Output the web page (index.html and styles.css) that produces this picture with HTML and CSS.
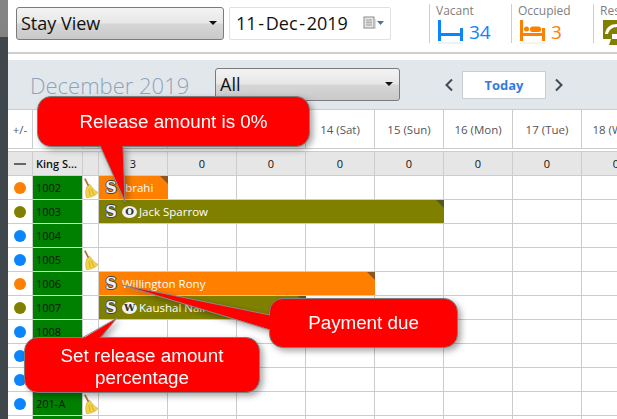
FILE: index.html
```html
<!DOCTYPE html>
<html lang="en">
<head>
<meta charset="utf-8">
<title>Stay View</title>
<link rel="stylesheet" href="styles.css">
</head>
<body>
<svg class="defs" width="0" height="0" aria-hidden="true">
  <symbol id="broom" viewBox="0 0 14 20">
    <path d="M.8 .6 L4.600 8" stroke="#a9762f" stroke-width="1.700" fill="none"/>
    <path d="M2.600 9 L6 6.400 C8 9.600 10.800 12.400 14 14.600 C12 17.600 7 19.800 2.400 19.800 C1.400 16 1.400 12 2.600 9 Z" fill="#f2d14a" stroke="#c89f2c" stroke-width=".5"/>
    <path d="M4.800 11 L6.400 18 M7 10.500 L10 16.800" stroke="#c99f2a" stroke-width=".7" fill="none"/>
  </symbol>
</svg>
<div class="page">
  <div class="rail"></div>
  <main class="main">
    <header class="topbar">
      <div class="select select-view"><span>Stay View</span><i class="caret"></i></div>
      <div class="datebox">
        <span class="date">11 - Dec - 2019</span>
        <svg class="cal" width="21" height="14" viewBox="0 0 21 14">
          <rect x="1" y="1" width="10" height="11" fill="#e8e8e8" stroke="#8a8a8a"/>
          <path d="M3 4h6M3 6.500h6M3 9h6M4 3v7M6 3v7M8 3v7" stroke="#a9a9a9" stroke-width=".8" fill="none"/>
          <path d="M12 13V3" stroke="#bbb" fill="none"/>
          <path d="M14 5h7l-3.500 4z" fill="#5a6f87"/>
        </svg>
      </div>
      <section class="stat stat-vacant">
        <div class="stat-label">Vacant</div>
        <div class="stat-value">
          <svg width="26" height="24" viewBox="0 0 26 24"><path d="M0 0h3v13h19V8h3v13h-3v-5H3v5H0z" fill="#0a84ff"/><path d="M0 23h25" stroke="#d8e8f6"/></svg>
          <span>34</span>
        </div>
      </section>
      <section class="stat stat-occupied">
        <div class="stat-label">Occupied</div>
        <div class="stat-value">
          <svg width="26" height="24" viewBox="0 0 26 24"><path d="M0 0h3v13h19V8h3v13h-3v-5H3v5H0z" fill="#ff8000"/><circle cx="6.500" cy="9" r="2.500" fill="#ff8000"/><rect x="10" y="6.500" width="11" height="5.500" rx="2.500" fill="#ff8000"/><path d="M0 23h25" stroke="#f5e6d2"/></svg>
          <span>3</span>
        </div>
      </section>
      <section class="stat stat-reserved">
        <div class="stat-label">Reserved</div>
        <div class="stat-value">
          <svg width="26" height="25" viewBox="0 0 26 25"><path d="M0 0h26v25H0z" fill="#808000"/><path d="M2 14C3 7 8 4 14 4v3C9 7 6 10 5 14zM9 14h5v5H9zM0 19h8l-2 6H0z" fill="#fff"/></svg>
        </div>
      </section>
    </header>

    <div class="toolbar">
      <h1 class="month">December 2019</h1>
      <div class="select select-filter"><span>All</span><i class="caret"></i></div>
      <div class="nav">
        <svg width="10" height="14" viewBox="0 0 10 14"><path d="M8 1.500 2.500 7 8 12.500" fill="none" stroke="#3f4a54" stroke-width="2"/></svg>
        <button class="today">Today</button>
        <svg width="10" height="14" viewBox="0 0 10 14"><path d="M2 1.500 7.500 7 2 12.500" fill="none" stroke="#3f4a54" stroke-width="2"/></svg>
      </div>
    </div>

    <div class="grid">
      <div class="row row-head">
        <div class="c c-status plusminus">+/-</div><div class="c c-room"></div><div class="c c-icon"></div>
        <div class="c c-day"></div><div class="c c-day"></div><div class="c c-day"></div><div class="c c-day">14 (Sat)</div><div class="c c-day">15 (Sun)</div><div class="c c-day">16 (Mon)</div><div class="c c-day">17 (Tue)</div><div class="c c-day">18 (Wed)</div>
      </div>
      <div class="row row-sum">
        <div class="c c-status"><i class="dash"></i></div><div class="c c-room type">King S...</div><div class="c c-icon"></div>
        <div class="c c-day">3</div><div class="c c-day">0</div><div class="c c-day">0</div><div class="c c-day">0</div><div class="c c-day">0</div><div class="c c-day">0</div><div class="c c-day">0</div><div class="c c-day">0</div>
      </div>

      <div class="row">
        <div class="c c-status"><i class="dot orange"></i></div><div class="c c-room">1002</div><div class="c c-icon"><svg class="broom"><use href="#broom"/></svg></div>
        <div class="c c-day"><div class="bar bar-orange span1"><b class="s">S</b><span class="name">Ibrahi</span></div></div><div class="c c-day"></div><div class="c c-day"></div><div class="c c-day"></div><div class="c c-day"></div><div class="c c-day"></div><div class="c c-day"></div><div class="c c-day"></div>
      </div>
      <div class="row">
        <div class="c c-status"><i class="dot olive"></i></div><div class="c c-room">1003</div><div class="c c-icon"></div>
        <div class="c c-day"><div class="bar bar-olive span5"><b class="s">S</b><b class="badge">O</b><span class="name">Jack Sparrow</span></div></div><div class="c c-day"></div><div class="c c-day"></div><div class="c c-day"></div><div class="c c-day"></div><div class="c c-day"></div><div class="c c-day"></div><div class="c c-day"></div>
      </div>
      <div class="row">
        <div class="c c-status"><i class="dot blue"></i></div><div class="c c-room">1004</div><div class="c c-icon"></div>
        <div class="c c-day"></div><div class="c c-day"></div><div class="c c-day"></div><div class="c c-day"></div><div class="c c-day"></div><div class="c c-day"></div><div class="c c-day"></div><div class="c c-day"></div>
      </div>
      <div class="row">
        <div class="c c-status"><i class="dot blue"></i></div><div class="c c-room">1005</div><div class="c c-icon"><svg class="broom"><use href="#broom"/></svg></div>
        <div class="c c-day"></div><div class="c c-day"></div><div class="c c-day"></div><div class="c c-day"></div><div class="c c-day"></div><div class="c c-day"></div><div class="c c-day"></div><div class="c c-day"></div>
      </div>
      <div class="row">
        <div class="c c-status"><i class="dot orange"></i></div><div class="c c-room">1006</div><div class="c c-icon"></div>
        <div class="c c-day"><div class="bar bar-orange span4"><b class="s">S</b><span class="name">Willington Rony</span></div></div><div class="c c-day"></div><div class="c c-day"></div><div class="c c-day"></div><div class="c c-day"></div><div class="c c-day"></div><div class="c c-day"></div><div class="c c-day"></div>
      </div>
      <div class="row">
        <div class="c c-status"><i class="dot olive"></i></div><div class="c c-room">1007</div><div class="c c-icon"></div>
        <div class="c c-day"><div class="bar bar-olive span3"><b class="s">S</b><b class="badge">W</b><span class="name">Kaushal Nair</span></div></div><div class="c c-day"></div><div class="c c-day"></div><div class="c c-day"></div><div class="c c-day"></div><div class="c c-day"></div><div class="c c-day"></div><div class="c c-day"></div>
      </div>
      <div class="row">
        <div class="c c-status"><i class="dot blue"></i></div><div class="c c-room">1008</div><div class="c c-icon"></div>
        <div class="c c-day"></div><div class="c c-day"></div><div class="c c-day"></div><div class="c c-day"></div><div class="c c-day"></div><div class="c c-day"></div><div class="c c-day"></div><div class="c c-day"></div>
      </div>
      <div class="row">
        <div class="c c-status"><i class="dot blue"></i></div><div class="c c-room"></div><div class="c c-icon"></div>
        <div class="c c-day"></div><div class="c c-day"></div><div class="c c-day"></div><div class="c c-day"></div><div class="c c-day"></div><div class="c c-day"></div><div class="c c-day"></div><div class="c c-day"></div>
      </div>
      <div class="row">
        <div class="c c-status"><i class="dot blue"></i></div><div class="c c-room"></div><div class="c c-icon"></div>
        <div class="c c-day"></div><div class="c c-day"></div><div class="c c-day"></div><div class="c c-day"></div><div class="c c-day"></div><div class="c c-day"></div><div class="c c-day"></div><div class="c c-day"></div>
      </div>
      <div class="row">
        <div class="c c-status"><i class="dot blue"></i></div><div class="c c-room">201-A</div><div class="c c-icon"><svg class="broom"><use href="#broom"/></svg></div>
        <div class="c c-day"></div><div class="c c-day"></div><div class="c c-day"></div><div class="c c-day"></div><div class="c c-day"></div><div class="c c-day"></div><div class="c c-day"></div><div class="c c-day"></div>
      </div>
      <div class="row">
        <div class="c c-status"></div><div class="c c-room"></div><div class="c c-icon"></div>
        <div class="c c-day"></div><div class="c c-day"></div><div class="c c-day"></div><div class="c c-day"></div><div class="c c-day"></div><div class="c c-day"></div><div class="c c-day"></div><div class="c c-day"></div>
      </div>
    </div>
  </main>

  <div class="callout callout-release">
    <div class="bubble">Release amount is 0%</div>
    <svg class="tail" width="1" height="1"><path class="t-fill" d="M63 49 88 105.500 86 49z"/><path class="t-line" d="M63 50 88 105.500 86 50"/></svg>
  </div>
  <div class="callout callout-payment">
    <div class="bubble">Payment due</div>
    <svg class="tail" width="1" height="1"><path class="t-fill" d="M2 17-147-13 2 32z"/><path class="t-line" d="M1 17-147-13 1 32"/></svg>
  </div>
  <div class="callout callout-percent">
    <div class="bubble">Set release amount<br>percentage</div>
    <svg class="tail" width="1" height="1"><path class="t-fill" d="M58 2 93-19 76 2z"/><path class="t-line" d="M58 1 93-19 76 1"/></svg>
  </div>
</div>
</body>
</html>
```

FILE: styles.css
```css
* { box-sizing: border-box; }
html, body { margin: 0; padding: 0; }
body { width: 617px; height: 419px; overflow: hidden; background: #fff; font-family: "Open Sans", "Noto Sans", sans-serif; }
.defs { position: absolute; }
.page { position: relative; display: flex; width: 617px; height: 419px; overflow: hidden; }

.rail { flex: 0 0 8px; background: linear-gradient(#3f474d, #3f474d) 0 37px / 8px 382px no-repeat, linear-gradient(#858585, #626262); }
.main { flex: 0 0 auto; width: 680px; }

.topbar { display: flex; align-items: flex-start; height: 54px; padding: 7px 0 0 8px; border-bottom: 2px solid #cfcfcf; background: #fff; }
.topbar > * { flex: none; }
.select { display: flex; align-items: center; justify-content: space-between; height: 33px; padding: 0 6px 1px 4px; border: 1px solid #7b7b7b; border-radius: 3px; background: linear-gradient(#f3f3f3, #e7e7e7 48%, #d6d6d6 52%, #c9c9c9); color: #111; font-size: 18px; }
.caret { width: 0; height: 0; border: 4px solid transparent; border-top: 4px solid #111; border-bottom: 0; }
.select-view { width: 208px; }
.datebox { display: flex; align-items: center; justify-content: space-between; width: 162px; height: 33px; margin-left: 5px; padding: 0 0 1px 6px; border: 1px solid #e0e0e0; border-radius: 2px; color: #111; font-size: 18px; }
.date { word-spacing: -3px; }
.cal { margin-right: 6px; }

.stat { width: 82px; height: 39px; margin-top: -3px; padding-left: 6px; border-left: 1px solid #cdcdcd; }
.stat-vacant { margin-left: 38px; }
.stat-label { color: #808080; font-size: 12px; line-height: 15px; margin-top: -1px; }
.stat-value { display: flex; align-items: flex-start; gap: 5px; margin-top: 2px; font-size: 19px; line-height: 24px; }
.stat-value svg { flex: none; }
.stat-vacant .stat-value { color: #0a84ff; margin-left: 2px; }
.stat-occupied .stat-value { color: #ff8000; margin-left: 2px; }
.stat-reserved .stat-value { margin-left: 3px; }

.toolbar { display: flex; align-items: flex-start; height: 49px; margin-top: 6px; padding: 8px 0 0 22px; background: #e2e7eb; }
.month { width: 185px; margin: 2px 0 0; color: #8da3bc; font-size: 22px; font-weight: 300; line-height: 30px; white-space: nowrap; }
.select-filter { width: 185px; }
.nav { display: flex; align-items: center; gap: 8px; height: 28px; margin: 3px 0 0 44px; }
.today { width: 84px; height: 28px; padding: 0; border: 1px solid #c5ced6; background: #fff; color: #2f7de1; font: 700 13px "Open Sans", sans-serif; }

.grid { border-top: 1px solid #ccc; background: #fff; }
.row { display: flex; height: 24px; }
.c { flex: none; height: 100%; border-right: 1px solid #ccc; border-bottom: 1px solid #ccc; font-size: 11px; display: flex; align-items: center; }
.c-status { width: 25px; justify-content: center; }
.c-room { width: 50px; padding-left: 3px; background: #008000; border-bottom-color: #d7e6d7; color: #111; font-size: 11px; }
.c-icon { width: 16px; padding-left: 1px; }
.c-day { position: relative; width: 69px; justify-content: center; }

.row-head { height: 40px; }
.row-head .c { height: 39px; background: #fff; color: #555; font-size: 11.500px; }
.row-head .c-room { background: #fff; }
.plusminus { color: #666; }
.row-sum { height: 25px; margin-top: 1px; border-top: 1px solid #ccc; }
.row-sum .c { height: 24px; background: #e6e6e6; color: #111; }
.row-sum .type { background: #e6e6e6; color: #111; border-bottom-color: #ccc; font-weight: 600; font-size: 11px; }
.dash { display: block; width: 12px; height: 2px; background: #666; }

.dot { display: block; width: 12px; height: 12px; border-radius: 50%; }
.orange { background: #ff8000; }
.olive { background: #808000; }
.blue { background: #0a84ff; }
.broom { flex: none; width: 14px; height: 20px; display: block; }

.bar { position: absolute; left: 0; top: 0; z-index: 1; display: flex; align-items: center; height: 23px; padding-left: 6px; color: #fff; font-size: 11.500px; white-space: nowrap; overflow: hidden; }
.bar::after { content: ""; position: absolute; right: 0; top: 0; border-top: 8px solid rgba(60, 60, 60, .6); border-left: 8px solid transparent; }
.bar-orange { background: #ff8000; }
.bar-olive { background: #808000; }
.span1 { width: 69px; }
.span3 { width: 207px; }
.span4 { width: 276px; }
.span5 { width: 345px; }
.s { width: 12px; margin-right: 5px; color: #f0f0f0; font: 700 16px/1 "DejaVu Serif", "Liberation Serif", serif; text-align: center; text-shadow: 1px 0 0 #444, -1px 0 0 #444, 0 1px 0 #444, 0 -1px 0 #444; }
.badge { display: flex; align-items: center; justify-content: center; width: 15px; height: 12px; margin-right: 2px; border-radius: 50%; background: #f2f2f2; color: #333; font: 700 10px/1 "DejaVu Serif", serif; }

.callout { position: absolute; z-index: 5; filter: drop-shadow(3px 3px 3px rgba(0, 0, 0, .35)); }
.bubble { display: flex; align-items: center; justify-content: center; width: 100%; height: 100%; border: 1px solid #7d7d7d; border-radius: 14px; background: #f00; color: #fff; font: 18.800px/22px "Liberation Sans", Arial, sans-serif; text-align: center; }
.tail { position: absolute; left: 0; top: 0; overflow: visible; }
.t-fill { fill: #f00; }
.t-line { fill: none; stroke: #8a8a8a; stroke-width: 1; }
.callout-release { left: 37px; top: 96px; width: 273px; height: 51px; }
.callout-payment { left: 269px; top: 298px; width: 189px; height: 50px; }
.callout-percent { left: 24px; top: 337px; width: 236px; height: 56px; }
.callout-percent .bubble { padding-top: 4px; }
```
